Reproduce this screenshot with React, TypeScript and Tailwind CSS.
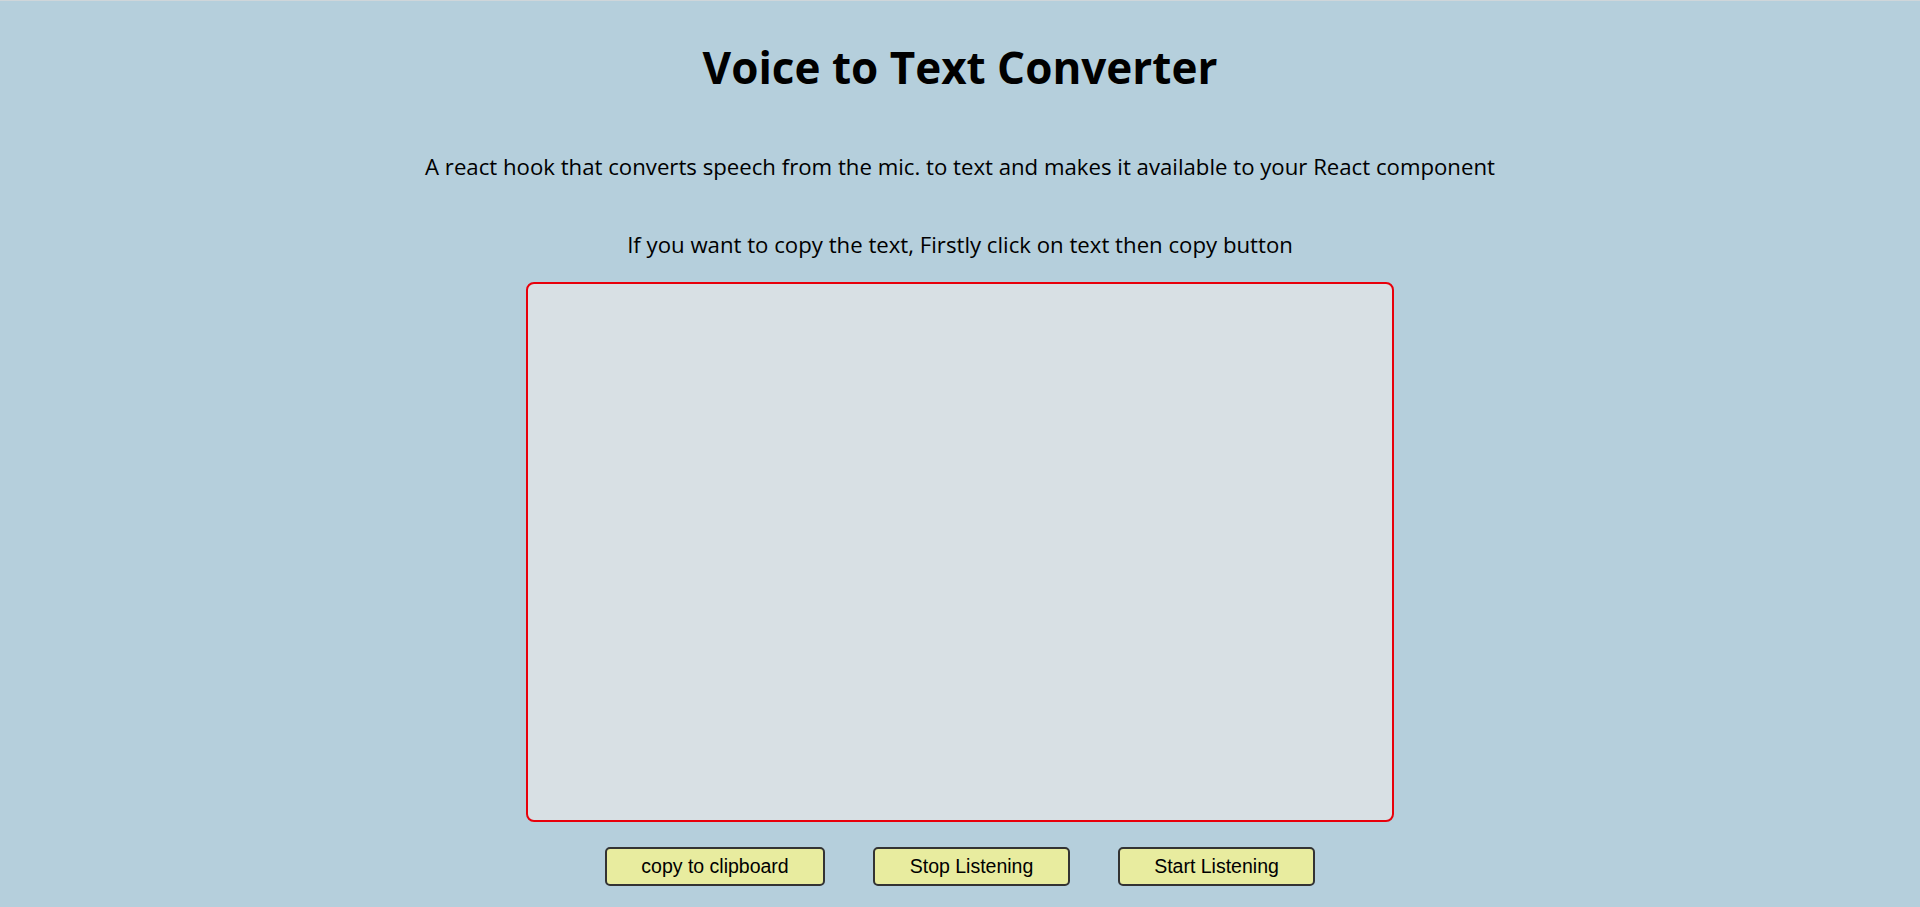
const App = () => {
  return (
    <div className="min-h-[907px] bg-[#b5cfdc] border-t border-[#cfd6da] flex flex-col items-center font-['Open_Sans',sans-serif] text-black">
      <h1 className="mt-[36px] text-[44px] leading-[60px] font-bold">Voice to Text Converter</h1>
      <p className="mt-[55px] text-[22.2px] leading-[30px]">
        A react hook that converts speech from the mic. to text and makes it available to your React component
      </p>
      <p className="mt-[48px] text-[22.2px] leading-[30px]">
        If you want to copy the text, Firstly click on text then copy button
      </p>
      <div className="mt-[22px] w-[868px] h-[540px] bg-[#d8e0e4] border-2 border-[#e8000b] rounded-[8px]"></div>
      <div className="mt-[25px] flex gap-[48px] font-['Liberation_Sans',sans-serif]">
        <button className="w-[220px] h-[39px] bg-[#e8ec9f] border-2 border-[#333] rounded-[5px] text-[19.5px]">
          copy to clipboard
        </button>
        <button className="w-[197px] h-[39px] bg-[#e8ec9f] border-2 border-[#333] rounded-[5px] text-[19.5px]">
          Stop Listening
        </button>
        <button className="w-[197px] h-[39px] bg-[#e8ec9f] border-2 border-[#333] rounded-[5px] text-[19.5px]">
          Start Listening
        </button>
      </div>
    </div>
  );
};

export default App;
